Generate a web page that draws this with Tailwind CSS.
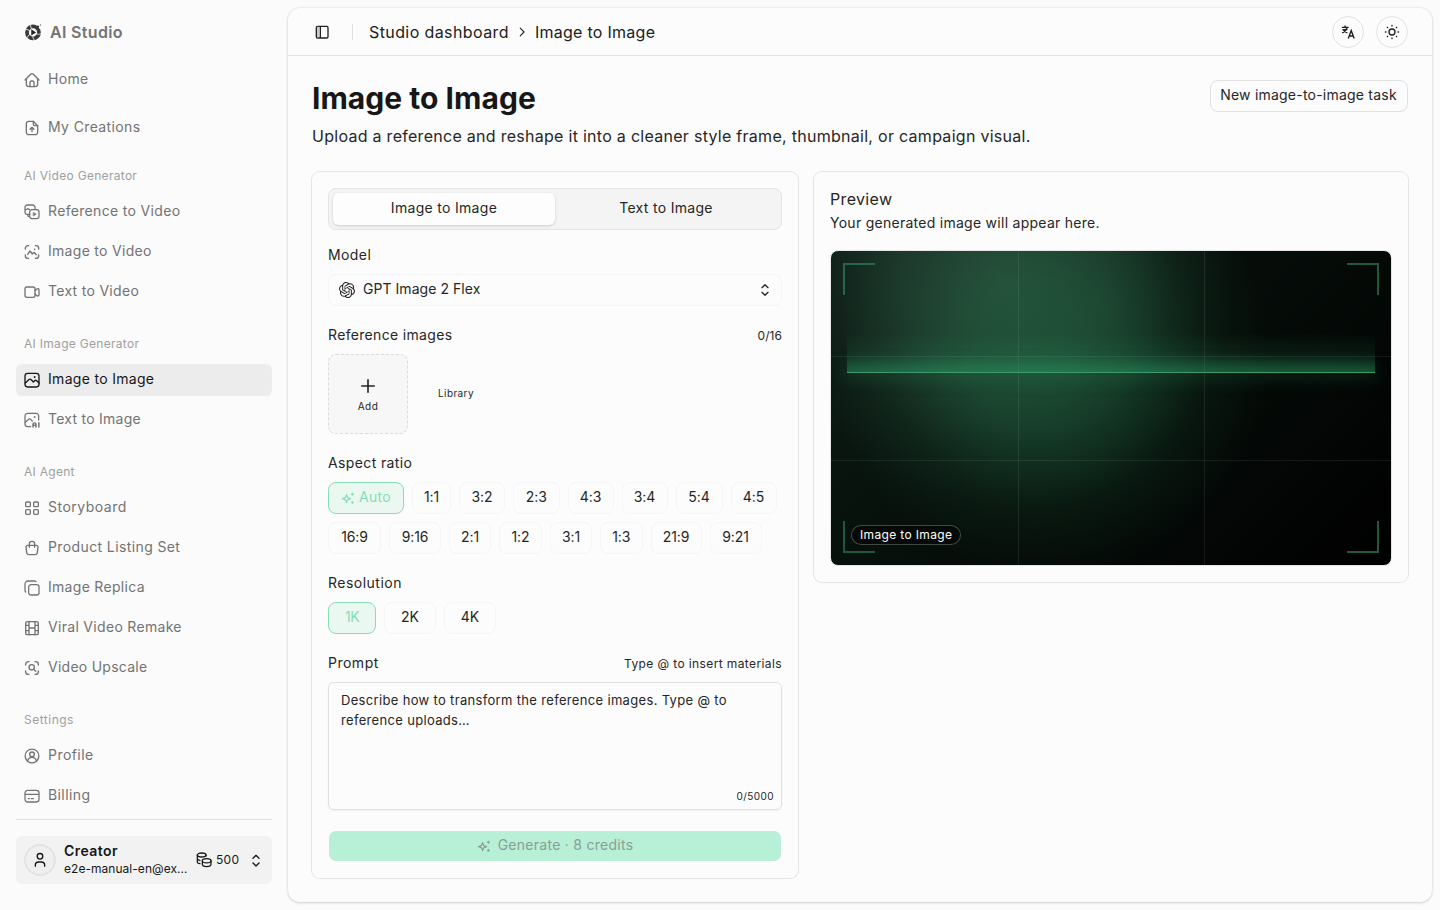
<!DOCTYPE html>
<html lang="en">
  <head>
    <meta charset="UTF-8" />
    <meta name="viewport" content="width=device-width, initial-scale=1.0" />
    <title>Image to Image - AI Studio</title>
    <script src="https://cdn.jsdelivr.net/npm/@tailwindcss/browser@4"></script>
  </head>
  <body
    class="flex h-screen overflow-hidden bg-[#fbfbfb] font-['Inter',sans-serif] text-sm tracking-[0.3px] text-[#262626]"
  >
    <!-- Sidebar -->
    <aside class="flex w-72 shrink-0 flex-col px-4 text-[#737373]">
      <div class="mt-4 flex h-8 items-center gap-2 px-2">
        <svg class="size-[18px]" viewBox="0 0 24 24" fill="none">
          <circle cx="12" cy="12.5" r="8" stroke="#3a3a3a" stroke-width="5" />
          <path
            d="M2 8.500c3 0 5 1 6 3M4.500 19.500c1-3 2.500-4.500 5-4.500M14 23c-2-2-2.500-4-1.500-6.500M22.500 14c-2.500 1.500-4.500 1.500-6.500 0M9 2c-.5 2.500 0 4.500 2 6"
            stroke="#fbfbfb"
            stroke-width="1.100"
          />
          <path d="M15.500 1.500l5.500 6.500 3-4-4-4z" fill="#fbfbfb" />
          <circle cx="18.500" cy="5" r="1.600" fill="#333" />
          <circle cx="22" cy="2.500" r="1" fill="#777" />
          <path d="M9.700 8.400l6.500 4.100-6.500 4.100z" fill="#262626" />
        </svg>
        <span class="text-base font-semibold tracking-[0.33px]">AI Studio</span>
      </div>

      <nav class="flex flex-col">
        <a class="mt-4 flex h-8 items-center gap-2 px-2" href="#">
          <svg
            class="size-4"
            viewBox="0 0 24 24"
            fill="none"
            stroke="currentColor"
            stroke-width="2"
            stroke-linecap="round"
            stroke-linejoin="round"
          >
            <path d="M1.500 12L10 3.300a2.800 2.800 0 0 1 4 0L22.500 12" />
            <path d="M3.500 10.500V18a4 4 0 0 0 4 4h9a4 4 0 0 0 4-4v-7.500" />
            <path d="M9 21.500V16a2.500 2.500 0 0 1 2.500-2.500h1A2.500 2.500 0 0 1 15 16v5.500" />
          </svg>
          <span class="pb-0.5 tracking-[0.35px]">Home</span>
        </a>
        <a class="mt-4 flex h-8 items-center gap-2 px-2" href="#">
          <svg
            class="size-4"
            viewBox="0 0 24 24"
            fill="none"
            stroke="currentColor"
            stroke-width="2"
            stroke-linecap="round"
            stroke-linejoin="round"
          >
            <path
              d="M14 2H7a3.500 3.500 0 0 0-3.500 3.500v13A3.500 3.500 0 0 0 7 22h10a3.500 3.500 0 0 0 3.500-3.500V8.500z"
            />
            <path d="M14 2v4.500a2 2 0 0 0 2 2h4.500" />
            <path d="M12 17.500v-6M9 14l3-3 3 3" />
          </svg>
          <span class="pb-0.5 tracking-[0.37px]">My Creations</span>
        </a>

        <div
          class="mt-4 flex h-8 items-center px-2 text-xs tracking-[0.3px] text-[#a0a0a0]"
        >
          AI Video Generator
        </div>
        <div class="mt-1 flex flex-col gap-2">
          <a class="flex h-8 items-center gap-2 px-2" href="#">
            <svg
              class="size-4"
              viewBox="0 0 24 24"
              fill="none"
              stroke="currentColor"
              stroke-width="1.900"
              stroke-linecap="round"
              stroke-linejoin="round"
            >
              <rect x="8.500" y="8.500" width="14" height="13.500" rx="3.500" />
              <path
                d="M16.500 8.500V5a3.500 3.500 0 0 0-3.500-3.500H5A3.500 3.500 0 0 0 1.500 5v7A3.500 3.500 0 0 0 5 15.500h3.500M1.500 9.500l4-2.500 3 1.500"
              />
              <path d="M5.500 15.500v1A2.500 2.500 0 0 0 8 19" />
              <path
                d="M14.300 12.800l4 2.500-4 2.500z"
                fill="currentColor"
                stroke-width="1"
              />
            </svg>
            <span class="pb-0.5 tracking-[0.33px]">Reference to Video</span>
          </a>
          <a class="flex h-8 items-center gap-2 px-2" href="#">
            <svg
              class="size-4"
              viewBox="0 0 24 24"
              fill="none"
              stroke="currentColor"
              stroke-width="2"
              stroke-linecap="round"
              stroke-linejoin="round"
            >
              <path
                d="M2 7.500V6.500a4 4 0 0 1 4-4h1M17 2.500h1a4 4 0 0 1 4 4v1M22 16.500v1a4 4 0 0 1-4 4h-1M7 21.500H6a4 4 0 0 1-4-4v-1"
              />
              <path d="M5.500 15.500l3.500-5 3.500 4.500 2.500-2.500 3.500 3.500" />
              <path d="M16 8h.01" stroke-width="2.500" />
            </svg>
            <span class="pb-0.5 tracking-[0.3px]">Image to Video</span>
          </a>
          <a class="flex h-8 items-center gap-2 px-2" href="#">
            <svg
              class="size-4"
              viewBox="0 0 24 24"
              fill="none"
              stroke="currentColor"
              stroke-width="2"
              stroke-linecap="round"
              stroke-linejoin="round"
            >
              <rect x="1.500" y="4.500" width="15" height="15.500" rx="3" />
              <path
                d="M16.500 10l3-2.500c1.300-1 3-.5 3 1.200v7.600c0 1.700-1.700 2.200-3 1.200l-3-2.500"
              />
            </svg>
            <span class="pb-0.5">Text to Video</span>
          </a>
        </div>

        <div
          class="mt-5 flex h-8 items-center px-2 text-xs tracking-[0.3px] text-[#a0a0a0]"
        >
          AI Image Generator
        </div>
        <div class="mt-1 flex flex-col gap-2">
          <a
            class="flex h-8 items-center gap-2 rounded-md bg-[#ececec] px-2 text-[#171717]"
            href="#"
          >
            <svg
              class="size-4"
              viewBox="0 0 24 24"
              fill="none"
              stroke="currentColor"
              stroke-width="2"
              stroke-linecap="round"
              stroke-linejoin="round"
            >
              <rect x="1.500" y="2" width="21" height="20.500" rx="4" />
              <path
                d="M2 16.500l5.500-5.200c1-.9 2-.9 3 0L14 15l2-2c1-1 2-.9 3 0l3.500 3.500"
              />
              <path d="M16 7.500h.01" stroke-width="2.800" />
            </svg>
            <span class="pb-0.5 tracking-[0.31px]">Image to Image</span>
          </a>
          <a class="flex h-8 items-center gap-2 px-2" href="#">
            <svg
              class="size-4"
              viewBox="0 0 24 24"
              fill="none"
              stroke="currentColor"
              stroke-width="1.900"
              stroke-linecap="round"
              stroke-linejoin="round"
            >
              <path
                d="M22 12V6a4 4 0 0 0-4-4H5.500a4 4 0 0 0-4 4v12a4 4 0 0 0 4 4H10"
              />
              <path d="M2 15.500l5-4.500c1-.9 2-.9 3 0l2.500 2.500" />
              <path d="M16 7.500h.01" stroke-width="2.800" />
              <path
                d="M13.500 22.500v-4a2.200 2.200 0 0 1 4.400 0v4M13.500 20h4.400M22.300 16v6.500"
                stroke-width="2.200"
              />
            </svg>
            <span class="pb-0.5 tracking-[0.25px]">Text to Image</span>
          </a>
        </div>

        <div
          class="mt-5 flex h-8 items-center px-2 text-xs tracking-[0.28px] text-[#a0a0a0]"
        >
          AI Agent
        </div>
        <div class="mt-1 flex flex-col gap-2">
          <a class="flex h-8 items-center gap-2 px-2" href="#">
            <svg
              class="size-4"
              viewBox="0 0 24 24"
              fill="none"
              stroke="currentColor"
              stroke-width="2"
              stroke-linejoin="round"
            >
              <rect x="2.500" y="3" width="7" height="7" rx="1.500" />
              <rect x="14.500" y="3" width="7" height="7" rx="1.500" />
              <rect x="2.500" y="14.500" width="7" height="7" rx="1.500" />
              <rect x="14.500" y="14.500" width="7" height="7" rx="1.500" />
            </svg>
            <span class="pb-0.5 tracking-[0.5px]">Storyboard</span>
          </a>
          <a class="flex h-8 items-center gap-2 px-2" href="#">
            <svg
              class="size-4"
              viewBox="0 0 24 24"
              fill="none"
              stroke="currentColor"
              stroke-width="2"
              stroke-linecap="round"
              stroke-linejoin="round"
            >
              <path
                d="M5.500 8h13a2.500 2.500 0 0 1 2.500 2.800l-1 8A3.700 3.700 0 0 1 16.300 22H7.700A3.700 3.700 0 0 1 4 18.800l-1-8A2.500 2.500 0 0 1 5.500 8z"
              />
              <path d="M8 11V6a4 4 0 0 1 8 0v5" />
            </svg>
            <span class="pb-0.5 tracking-[0.39px]">Product Listing Set</span>
          </a>
          <a class="flex h-8 items-center gap-2 px-2" href="#">
            <svg
              class="size-4"
              viewBox="0 0 24 24"
              fill="none"
              stroke="currentColor"
              stroke-width="1.900"
              stroke-linecap="round"
              stroke-linejoin="round"
            >
              <rect x="7" y="7" width="15.500" height="15.500" rx="3.500" />
              <path
                d="M18 2.500c-.6-.7-1.500-1-2.500-1H6A4.500 4.500 0 0 0 1.500 6v9.500c0 1 .4 1.900 1 2.500"
              />
            </svg>
            <span class="pb-0.5">Image Replica</span>
          </a>
          <a class="flex h-8 items-center gap-2 px-2" href="#">
            <svg
              class="size-4"
              viewBox="0 0 24 24"
              fill="none"
              stroke="currentColor"
              stroke-width="2"
              stroke-linecap="round"
              stroke-linejoin="round"
            >
              <rect x="2.500" y="2.500" width="19" height="19.500" rx="3" />
              <path
                d="M7.500 2.500V22M16.500 2.500V22M7.500 12h9M2.500 8h5M2.500 16h5M16.500 8h5M16.500 16h5"
              />
            </svg>
            <span class="pb-0.5 tracking-[0.31px]">Viral Video Remake</span>
          </a>
          <a class="flex h-8 items-center gap-2 px-2" href="#">
            <svg
              class="size-4"
              viewBox="0 0 24 24"
              fill="none"
              stroke="currentColor"
              stroke-width="2"
              stroke-linecap="round"
              stroke-linejoin="round"
            >
              <path
                d="M2.500 7.500V6.500a4 4 0 0 1 4-4H7.500M16.500 2.500h1a4 4 0 0 1 4 4v1M21.500 16.500v1a4 4 0 0 1-4 4h-1M7.500 21.500H6.500a4 4 0 0 1-4-4v-1"
              />
              <circle cx="11.500" cy="11" r="4" />
              <path d="M14.500 14l3 3" />
            </svg>
            <span class="pb-0.5 tracking-[0.26px]">Video Upscale</span>
          </a>
        </div>

        <div
          class="mt-5 flex h-8 items-center px-2 text-xs tracking-[0.5px] text-[#a0a0a0]"
        >
          Settings
        </div>
        <div class="mt-1 flex flex-col gap-2">
          <a class="flex h-8 items-center gap-2 px-2" href="#">
            <svg
              class="size-4"
              viewBox="0 0 24 24"
              fill="none"
              stroke="currentColor"
              stroke-width="2"
              stroke-linecap="round"
            >
              <circle cx="12" cy="12" r="10.300" />
              <circle cx="12" cy="9.500" r="3.500" />
              <path d="M5.500 19.500a6.600 6.600 0 0 1 13 0" />
            </svg>
            <span class="pb-0.5 tracking-[0.45px]">Profile</span>
          </a>
          <a class="flex h-8 items-center gap-2 px-2" href="#">
            <svg
              class="size-4"
              viewBox="0 0 24 24"
              fill="none"
              stroke="currentColor"
              stroke-width="1.900"
              stroke-linecap="round"
            >
              <rect x="1.500" y="3.500" width="21" height="17.500" rx="4" />
              <path d="M2 9.500h20M6.500 16h1.500M11 16h3" />
            </svg>
            <span class="pb-0.5 tracking-[0.4px]">Billing</span>
          </a>
        </div>
      </nav>

      <div class="mt-[7px] h-px bg-[#e0e0e0]"></div>
      <div
        class="mt-4 flex h-12 items-center rounded-md bg-[#f2f2f2] px-2 text-[#171717]"
      >
        <div
          class="flex size-8 shrink-0 items-center justify-center rounded-full border-2 border-[#e3e3e3] bg-[#efefef]"
        >
          <svg
            class="size-4"
            viewBox="0 0 24 24"
            fill="none"
            stroke="currentColor"
            stroke-width="2"
            stroke-linecap="round"
          >
            <circle cx="12" cy="6.500" r="4.200" />
            <path d="M5 21.500v-1.500a5 5 0 0 1 5-5h4a5 5 0 0 1 5 5v1.500" />
          </svg>
        </div>
        <div class="ml-2 flex w-[133px] flex-col pb-0.5">
          <span class="text-sm/[18px] font-semibold tracking-[0.43px]"
            >Creator</span
          >
          <span class="text-xs/[17px] tracking-[0.04px]"
            >e2e-manual-en@ex…</span
          >
        </div>
        <svg
          class="-ml-px size-4 shrink-0"
          viewBox="0 0 24 24"
          fill="none"
          stroke="currentColor"
          stroke-width="1.900"
          stroke-linecap="round"
        >
          <ellipse cx="8.500" cy="4.500" rx="6.500" ry="3" />
          <path
            d="M2 4.500V15c0 1.200 1.500 2.200 4 2.500M2 10c0 1.200 1.500 2 3.800 2.500M15 4.500V6"
          />
          <ellipse cx="16" cy="13" rx="6.500" ry="3.200" />
          <path d="M9.500 13v5.500c0 2 3 3.500 6.500 3.500s6.500-1.500 6.500-3.500V13" />
        </svg>
        <span class="ml-1 text-xs tracking-[0.3px]">500</span>
        <svg
          class="mt-px ml-auto size-4 shrink-0"
          viewBox="0 0 24 24"
          fill="none"
          stroke="currentColor"
          stroke-width="2"
          stroke-linecap="round"
          stroke-linejoin="round"
        >
          <path d="M7.500 8l4.500-4.500L16.500 8M7.500 15l4.500 4.500 4.500-4.500" />
        </svg>
      </div>
    </aside>

    <!-- Main panel -->
    <main
      class="my-2 mr-2 flex min-w-0 flex-1 flex-col rounded-xl bg-[#fcfcfc] shadow-[0_0_2px_rgba(0,0,0,0.12),0_1px_3px_rgba(0,0,0,0.14)]"
    >
      <header
        class="flex h-12 shrink-0 items-center border-b border-[#e2e2e2] px-6 text-base text-[#202020]"
      >
        <svg
          class="ml-0.5 size-4"
          viewBox="0 0 24 24"
          fill="none"
          stroke="currentColor"
          stroke-width="2"
        >
          <rect x="3.500" y="3.500" width="17.500" height="17.500" rx="2" />
          <path d="M9.500 3.500v17.500" />
          <path d="M6 4v16.500" stroke="#9a9a9a" stroke-width="1.500" />
        </svg>
        <div class="ml-[22px] h-4 w-px bg-[#e0e0e0]"></div>
        <span class="ml-4 tracking-[0.4px]">Studio dashboard</span>
        <svg
          class="ml-1.5 size-3.5"
          viewBox="0 0 24 24"
          fill="none"
          stroke="currentColor"
          stroke-width="1.900"
          stroke-linecap="round"
          stroke-linejoin="round"
        >
          <path d="M9 5.500l6.500 6.500L9 18.500" />
        </svg>
        <span class="ml-1.5 tracking-[0.27px]">Image to Image</span>
        <div class="ml-auto flex gap-3">
          <button
            class="flex size-8 items-center justify-center rounded-full border border-[#e2e2e2]"
          >
            <svg
              class="size-3.5"
              viewBox="0 0 24 24"
              fill="none"
              stroke="currentColor"
              stroke-width="2.400"
            >
              <path
                d="M1.500 4h11.500M7 1v3M2.500 8h8.500M10.500 4.500C9.500 8.500 6.500 11.500 2 13.500M4 8.500c1.500 2.500 4 4.200 7 5"
              />
              <path d="M12.500 23l5-13.500 5 13.500M14.300 18.800h6.400" />
            </svg>
          </button>
          <button
            class="flex size-8 items-center justify-center rounded-full border border-[#e2e2e2]"
          >
            <svg
              class="size-4"
              viewBox="0 0 24 24"
              fill="none"
              stroke="currentColor"
              stroke-width="2"
              stroke-linecap="round"
            >
              <circle cx="12" cy="12" r="4.500" />
              <path
                d="M12 2.200v.8M12 21v.8M2.200 12h.8M21 12h.8M5 5l.5.5M18.500 18.500l.5.5M19 5l-.5.5M5.500 18.500L5 19"
              />
            </svg>
          </button>
        </div>
      </header>

      <div class="flex flex-col p-6">
        <div class="flex items-start justify-between">
          <div>
            <h1 class="text-3xl/9 font-bold text-[#171717]">
              <span class="tracking-[0.03px]">Image to Image</span>
            </h1>
            <p class="mt-2 text-base/6 tracking-[0.28px]">
              Upload a reference and reshape it into a cleaner style frame,
              thumbnail, or campaign visual.
            </p>
          </div>
          <button
            class="flex h-8 w-[198px] items-center justify-center rounded-lg border border-[#e0e0e0] pr-px pb-0.5 tracking-[0.22px]"
          >
            New image-to-image task
          </button>
        </div>

        <div class="mt-6 flex items-start gap-4">
          <!-- Form -->
          <section
            class="flex w-[486px] shrink-0 flex-col rounded-lg p-4 ring-1 ring-[#e5e5e5]"
          >
            <div
              class="grid h-[42px] grid-cols-2 rounded-lg border border-[#e4e4e4] bg-[#f4f4f4] p-1 tracking-[0.31px]"
            >
              <button
                class="rounded-md bg-[#fdfdfd] pb-0.5 shadow-[0_1px_3px_rgba(0,0,0,0.16)]"
              >
                Image to Image
              </button>
              <button class="pb-0.5">Text to Image</button>
            </div>

            <label class="mt-4 pb-0.5 leading-[18px] tracking-[0.4px]"
              >Model</label
            >
            <button
              class="mt-2 flex h-8 items-center rounded-lg border border-[#f5f5f5] px-2.5"
            >
              <svg class="size-4" viewBox="0 0 24 24" fill="currentColor">
                <path
                  d="M22.282 9.821a5.985 5.985 0 0 0-.516-4.910 6.046 6.046 0 0 0-6.510-2.900A6.065 6.065 0 0 0 4.981 4.180a5.985 5.985 0 0 0-3.998 2.900 6.046 6.046 0 0 0 .743 7.097 5.980 5.980 0 0 0 .510 4.911 6.051 6.051 0 0 0 6.515 2.900A5.985 5.985 0 0 0 13.260 24a6.056 6.056 0 0 0 5.772-4.206 5.990 5.990 0 0 0 3.997-2.900 6.056 6.056 0 0 0-.747-7.073zM13.260 22.430a4.476 4.476 0 0 1-2.876-1.040l.141-.081 4.779-2.758a.795.795 0 0 0 .392-.681v-6.737l2.020 1.168a.071.071 0 0 1 .038.052v5.583a4.504 4.504 0 0 1-4.494 4.494zM3.600 18.304a4.470 4.470 0 0 1-.535-3.014l.142.085 4.783 2.759a.771.771 0 0 0 .780 0l5.843-3.369v2.332a.080.080 0 0 1-.033.062L9.740 19.950a4.500 4.500 0 0 1-6.140-1.646zM2.340 7.896a4.485 4.485 0 0 1 2.366-1.973V11.600a.766.766 0 0 0 .388.676l5.815 3.355-2.020 1.168a.076.076 0 0 1-.071 0l-4.830-2.786A4.504 4.504 0 0 1 2.340 7.872zm16.597 3.855l-5.833-3.387L15.119 7.200a.076.076 0 0 1 .071 0l4.830 2.791a4.494 4.494 0 0 1-.676 8.105v-5.678a.790.790 0 0 0-.407-.667zm2.010-3.023l-.141-.085-4.774-2.782a.776.776 0 0 0-.785 0L9.409 9.230V6.897a.066.066 0 0 1 .028-.061l4.830-2.787a4.500 4.500 0 0 1 6.680 4.660zm-12.640 4.135l-2.020-1.164a.080.080 0 0 1-.038-.057V6.075a4.500 4.500 0 0 1 7.375-3.453l-.142.080L8.704 5.460a.795.795 0 0 0-.393.681zm1.097-2.365l2.602-1.500 2.607 1.500v2.999l-2.597 1.500-2.607-1.500z"
                />
              </svg>
              <span class="ml-2 pb-0.5 tracking-[0.05px]"
                >GPT Image 2 Flex</span
              >
              <svg
                class="-mr-0.5 ml-auto size-4"
                viewBox="0 0 24 24"
                fill="none"
                stroke="currentColor"
                stroke-width="2"
                stroke-linecap="round"
                stroke-linejoin="round"
              >
                <path d="M7.500 8.500L12 4l4.500 4.500M7.500 15.500L12 20l4.500-4.500" />
              </svg>
            </button>

            <div class="mt-5 flex items-center justify-between">
              <label class="pb-0.5 leading-[18px] tracking-[0.33px]"
                >Reference images</label
              >
              <span class="text-xs tracking-[0.05px]">0/16</span>
            </div>
            <div class="mt-2 flex gap-2 text-[10px]/4 tracking-[0.4px]">
              <button
                class="flex size-20 flex-col items-center justify-center gap-0.5 rounded-lg border border-dashed border-[#dcdcdc] bg-[#f7f7f7]"
              >
                <svg
                  class="mt-0.5 size-5"
                  viewBox="0 0 24 24"
                  fill="none"
                  stroke="currentColor"
                  stroke-width="2"
                  stroke-linecap="round"
                >
                  <path d="M12 4.500v15M4.500 12h15" />
                </svg>
                <span>Add</span>
              </button>
              <button class="size-20 pb-0.5">Library</button>
            </div>

            <label class="mt-5 pb-0.5 leading-[18px] tracking-[0.38px]"
              >Aspect ratio</label
            >
            <div class="mt-2 flex gap-2 tracking-[-0.1px]">
              <button
                class="flex h-8 w-[76px] items-center justify-center gap-1 rounded-lg border border-[#84dfb5] bg-[#eaf8f1] tracking-[0.3px] text-[#84dfb5]"
              >
                <svg
                  class="size-3.5"
                  viewBox="0 0 24 24"
                  fill="none"
                  stroke="currentColor"
                  stroke-width="2"
                  stroke-linejoin="round"
                >
                  <path
                    d="M9.500 6l1.300 3.800a3 3 0 0 0 1.900 1.900L16.500 13l-3.800 1.300a3 3 0 0 0-1.900 1.900L9.500 20l-1.300-3.800a3 3 0 0 0-1.900-1.900L2.500 13l3.800-1.300a3 3 0 0 0 1.900-1.900z"
                  />
                  <path
                    d="M19.500 3l.8 1.700L22 5.500l-1.700.8-.8 1.700-.8-1.700-1.700-.8 1.700-.8zM19.500 17l.8 1.700 1.700.8-1.700.8-.8 1.700-.8-1.700-1.700-.8 1.700-.8z"
                    fill="currentColor"
                    stroke-width="1"
                  />
                </svg>
                <span class="pb-0.5">Auto</span>
              </button>
              <button class="h-8 w-[39px] rounded-lg border border-[#f6f6f6] pb-0.5">1:1</button>
              <button class="h-8 w-[46px] rounded-lg border border-[#f6f6f6] pb-0.5">3:2</button>
              <button class="h-8 w-[46.5px] rounded-lg border border-[#f6f6f6] pb-0.5">2:3</button>
              <button class="h-8 w-[46px] rounded-lg border border-[#f6f6f6] pb-0.5">4:3</button>
              <button class="h-8 w-[46px] rounded-lg border border-[#f6f6f6] pb-0.5">3:4</button>
              <button class="h-8 w-[47px] rounded-lg border border-[#f6f6f6] pb-0.5">5:4</button>
              <button class="h-8 w-[46px] rounded-lg border border-[#f6f6f6] pb-0.5">4:5</button>
            </div>
            <div class="mt-2 flex gap-2 tracking-[-0.1px]">
              <button class="h-8 w-[53px] rounded-lg border border-[#f6f6f6] pb-0.5">16:9</button>
              <button class="h-8 w-[52px] rounded-lg border border-[#f6f6f6] pb-0.5">9:16</button>
              <button class="h-8 w-[42px] rounded-lg border border-[#f6f6f6] pb-0.5">2:1</button>
              <button class="h-8 w-[43px] rounded-lg border border-[#f6f6f6] pb-0.5">1:2</button>
              <button class="h-8 w-[42px] rounded-lg border border-[#f6f6f6] pb-0.5">3:1</button>
              <button class="h-8 w-[42.5px] rounded-lg border border-[#f6f6f6] pb-0.5">1:3</button>
              <button class="h-8 w-[51px] rounded-lg border border-[#f6f6f6] pb-0.5">21:9</button>
              <button class="h-8 w-[52px] rounded-lg border border-[#f6f6f6] pb-0.5">9:21</button>
            </div>

            <label class="mt-5 pb-0.5 leading-[18px] tracking-[0.49px]"
              >Resolution</label
            >
            <div class="mt-2 flex gap-2 tracking-[0px]">
              <button
                class="h-8 w-12 rounded-lg border border-[#84dfb5] bg-[#eaf8f1] pb-0.5 tracking-[-0.5px] text-[#84dfb5]"
              >
                1K
              </button>
              <button class="h-8 w-[52px] rounded-lg border border-[#f6f6f6] pb-0.5">2K</button>
              <button class="h-8 w-[52px] rounded-lg border border-[#f6f6f6] pb-0.5">4K</button>
            </div>

            <div class="mt-5 flex items-center justify-between">
              <label class="pb-0.5 leading-[18px] tracking-[0.5px]"
                >Prompt</label
              >
              <span class="text-xs tracking-[0.39px]"
                >Type @ to insert materials</span
              >
            </div>
            <div
              class="mt-2 flex h-32 flex-col justify-between rounded-md border border-[#e0e0e0] pt-[7px] pr-[7px] pb-2 pl-3 shadow-xs"
            >
              <p class="text-[13px]/5 tracking-[0.33px]">
                Describe how to transform the reference images. Type @ to<br />reference
                uploads…
              </p>
              <span class="-mb-[3px] text-right text-[10px]/4 tracking-[0.45px]"
                >0/5000</span
              >
            </div>
            <button
              class="mt-5 flex h-8 items-center justify-center gap-[7px] rounded-lg border border-transparent bg-[#b7f0d6] bg-clip-padding tracking-[0.27px] text-[#8a9e94]"
            >
              <svg
                class="size-3.5"
                viewBox="0 0 24 24"
                fill="none"
                stroke="currentColor"
                stroke-width="2"
                stroke-linejoin="round"
              >
                <path
                  d="M9.500 6l1.300 3.800a3 3 0 0 0 1.900 1.900L16.500 13l-3.800 1.300a3 3 0 0 0-1.900 1.900L9.500 20l-1.300-3.800a3 3 0 0 0-1.900-1.900L2.500 13l3.800-1.300a3 3 0 0 0 1.900-1.900z"
                />
                <path
                  d="M19.500 3l.8 1.700L22 5.500l-1.700.8-.8 1.700-.8-1.700-1.700-.8 1.700-.8zM19.500 17l.8 1.700 1.700.8-1.700.8-.8 1.700-.8-1.700-1.700-.8 1.700-.8z"
                  fill="currentColor"
                  stroke-width="1"
                />
              </svg>
              <span class="pb-0.5">Generate · 8 credits</span>
            </button>
          </section>

          <!-- Preview -->
          <section class="flex-1 rounded-lg p-4 ring-1 ring-[#e5e5e5]">
            <h2 class="text-base/[22px] tracking-[0.33px]">Preview</h2>
            <p class="mt-[3px] mb-[17px] leading-5 tracking-[0.27px]">
              Your generated image will appear here.
            </p>
            <div
              class="relative h-[316px] overflow-hidden rounded-lg border border-[#e5e5e5] bg-[radial-gradient(circle_220px_at_39%_34%,rgba(32,110,70,0.5),rgba(32,110,70,0.38)_35%,rgba(32,110,70,0.12)_70%,transparent),radial-gradient(circle_230px_at_31%_10%,rgba(75,125,100,0.45),rgba(75,125,100,0.28)_45%,rgba(75,125,100,0.08)_75%,transparent),linear-gradient(135deg,#0c1c15,#060d09_50%,#000)]"
            >
              <div class="absolute inset-y-0 left-1/3 w-px bg-white/8"></div>
              <div class="absolute inset-y-0 left-2/3 w-px bg-white/8"></div>
              <div class="absolute inset-x-0 top-1/3 h-px bg-white/8"></div>
              <div class="absolute inset-x-0 top-2/3 h-px bg-white/8"></div>

              <div
                class="absolute top-3 left-3 size-8 border-t-2 border-l-2 border-[#27664a]"
              ></div>
              <div
                class="absolute top-3 right-3 size-8 border-t-2 border-r-2 border-[#1f5a3f]"
              ></div>
              <div
                class="absolute bottom-3 left-3 size-8 border-b-2 border-l-2 border-[#1f5a3f]"
              ></div>
              <div
                class="absolute right-3 bottom-3 size-8 border-r-2 border-b-2 border-[#1f5a3f]"
              ></div>

              <!-- Scan line with its trail -->
              <div
                class="absolute inset-x-4 top-[82px] h-10 bg-linear-to-b from-transparent via-[#2fa56c]/12 via-55% to-[#2fa56c]/45"
              ></div>
              <div
                class="absolute inset-x-4 top-[121px] h-px bg-[#3c9a6b] shadow-[0_0_18px_2px_rgba(40,150,95,0.55)]"
              ></div>

              <div
                class="absolute bottom-5 left-5 flex h-5 items-center rounded-full border border-white/25 bg-black/40 px-2 text-xs tracking-[0.35px] text-white"
              >
                Image to Image
              </div>
            </div>
          </section>
        </div>
      </div>
    </main>
  </body>
</html>
